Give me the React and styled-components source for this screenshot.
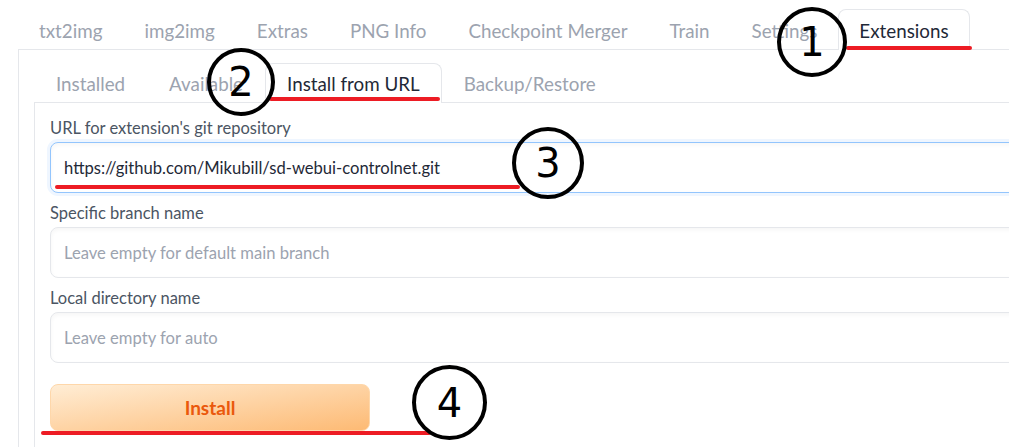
import React from 'react'
import styled, { createGlobalStyle } from 'styled-components'

const GlobalStyle = createGlobalStyle`
  html, body {
    margin: 0;
    padding: 0;
    background: #fff;
    overflow: hidden;
  }
  body {
    font-family: Lato, "Noto Sans", sans-serif;
  }
`

const Page = styled.div`
  position: relative;
  width: 1009px;
  height: 447px;
  overflow: hidden;
  padding: 9px 0 0 18px;
  box-sizing: border-box;
  display: flex;
  flex-direction: column;
`

const TabNav = styled.nav`
  display: flex;
  height: 40px;
  align-items: stretch;
`

const Tab = styled.div`
  display: flex;
  align-items: center;
  padding: 0 ${p => (p.$tight ? 20 : 21)}px;
  font-size: 18.8px;
  white-space: nowrap;
  color: ${p => (p.$active ? '#1f2937' : '#9ca3af')};
  background: ${p => (p.$active ? '#fff' : 'transparent')};
  border: 1px solid ${p => (p.$active ? '#e5e7eb' : 'transparent')};
  border-bottom: none;
  border-radius: 8px 8px 0 0;
  margin-bottom: -1px;
  position: relative;
  z-index: 1;
  box-sizing: border-box;
`

const Panel = styled.div`
  flex: 1;
  display: flex;
  flex-direction: column;
  border-top: 1px solid #e5e7eb;
  border-left: 1px solid #e5e7eb;
  padding: 13px 0 0 15px;
`

const SubNav = styled(TabNav)`
  height: 39px;
`

const SubPanel = styled.div`
  flex: 1;
  display: flex;
  flex-direction: column;
  border-top: 1px solid #e5e7eb;
  border-left: 1px solid #e5e7eb;
  padding: 14px 0 0 15px;
`

const Field = styled.div`
  display: flex;
  flex-direction: column;
  margin-bottom: 9px;
  margin-right: -30px;
`

const Label = styled.label`
  font-size: 16.5px;
  color: #4b5563;
  line-height: 22px;
  margin-bottom: 3px;
`

const Input = styled.div`
  height: 51px;
  box-sizing: border-box;
  display: flex;
  align-items: center;
  padding: 0 13px;
  font-size: 16.6px;
  color: ${p => (p.$placeholder ? '#9ca3af' : '#1f2937')};
  background: #fff;
  border: 1px solid ${p => (p.$focused ? '#93c5fd' : '#e5e7eb')};
  border-radius: 8px;
  box-shadow: ${p => (p.$focused
    ? '0 0 0 3px #eff6ff, inset 0 2px 4px rgba(0,0,0,0.04)'
    : 'inset 0 2px 4px rgba(0,0,0,0.04)')};
`

const Button = styled.button`
  margin-top: 12px;
  width: 320px;
  height: 47px;
  border: 1px solid #fed7aa;
  border-radius: 8px;
  background: linear-gradient(to bottom right, #ffedd5, #fdba74);
  color: #ea580c;
  font-family: Lato, "Noto Sans", sans-serif;
  font-weight: 700;
  font-size: 19px;
  cursor: pointer;
`

const Circle = styled.div`
  position: absolute;
  left: ${p => p.$x}px;
  top: ${p => p.$y}px;
  width: ${p => p.$size}px;
  height: ${p => p.$size}px;
  box-sizing: border-box;
  border: 4px solid #000;
  border-radius: 50%;
  display: flex;
  align-items: center;
  justify-content: center;
  font-family: "DejaVu Sans", sans-serif;
  font-size: 40px;
  color: #000;
  z-index: 5;
`

const Mark = styled.div`
  position: absolute;
  left: ${p => p.$x}px;
  top: ${p => p.$y}px;
  width: ${p => p.$w}px;
  height: 4px;
  border-radius: 2px;
  background: #ed1c24;
  z-index: 4;
`

const mainTabs = ['txt2img', 'img2img', 'Extras', 'PNG Info', 'Checkpoint Merger', 'Train', 'Settings', 'Extensions']
const subTabs = ['Installed', 'Available', 'Install from URL', 'Backup/Restore']

const marks = [
  { x: 846, y: 46, w: 126 },
  { x: 269, y: 97, w: 171 },
  { x: 55, y: 185, w: 465 },
  { x: 41, y: 431, w: 390 }
]

const circles = [
  { n: 1, x: 777, y: 7, size: 70 },
  { n: 2, x: 207, y: 48, size: 68 },
  { n: 3, x: 512, y: 127, size: 72 },
  { n: 4, x: 412, y: 365, size: 75 }
]

const App = () => {
  return (
    <>
      <GlobalStyle />
      <Page>
        <TabNav>
          {mainTabs.map(t => (
            <Tab key={t} $tight $active={t === 'Extensions'}>{t}</Tab>
          ))}
        </TabNav>
        <Panel>
          <SubNav>
            {subTabs.map(t => (
              <Tab key={t} $active={t === 'Install from URL'}>{t}</Tab>
            ))}
          </SubNav>
          <SubPanel>
            <Field>
              <Label>URL for extension's git repository</Label>
              <Input $focused>https://github.com/Mikubill/sd-webui-controlnet.git</Input>
            </Field>
            <Field>
              <Label>Specific branch name</Label>
              <Input $placeholder>Leave empty for default main branch</Input>
            </Field>
            <Field>
              <Label>Local directory name</Label>
              <Input $placeholder>Leave empty for auto</Input>
            </Field>
            <Button>Install</Button>
          </SubPanel>
        </Panel>
        {marks.map((m, i) => (
          <Mark key={i} $x={m.x} $y={m.y} $w={m.w} />
        ))}
        {circles.map(c => (
          <Circle key={c.n} $x={c.x} $y={c.y} $size={c.size}>{c.n}</Circle>
        ))}
      </Page>
    </>
  )
}

export default App
